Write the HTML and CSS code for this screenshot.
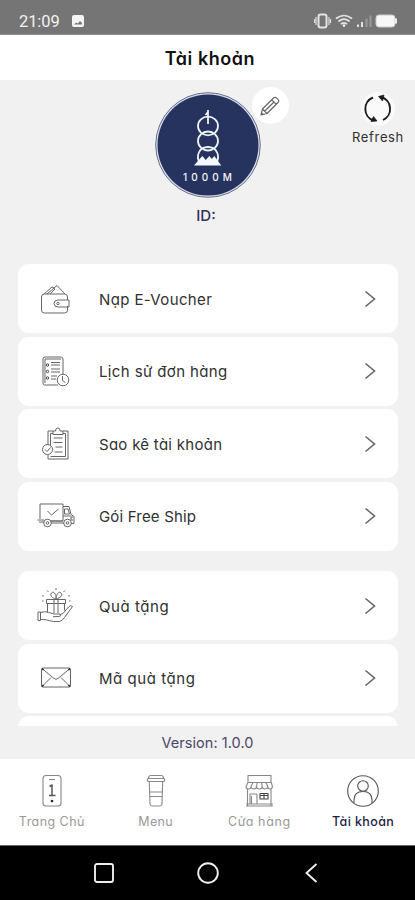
FILE: index.html
```html
<!DOCTYPE html>
<html lang="vi">
<head>
<meta charset="utf-8">
<meta name="viewport" content="width=device-width, initial-scale=1">
<title>Tài khoản</title>
<link rel="stylesheet" href="styles.css">
</head>
<body>
<header class="status">
  <span class="clock">21:09</span>
  <svg class="shot" width="12" height="12" viewBox="0 0 12 12"><rect width="12" height="12" rx="2" fill="#f4f4f4"/><path d="M2 9.5l2.2-2 1.6 1 2.2-2.500 2 2v1.500z" fill="#777"/></svg>
  <svg class="signals" width="84" height="18" viewBox="0 0 84 18" fill="none">
    <rect x="4.500" y="2.500" width="8" height="13" rx="2" stroke="#e4e4e4" stroke-width="2"/>
    <path d="M2 5v8M15 5v8M.5 7v4M16.500 7v4" stroke="#ddd" stroke-width="1.200"/>
    <g stroke="#e4e4e4" stroke-width="1.700" stroke-linecap="round"><path d="M22.500 6.200q7.500-5.400 15 0M25 9q5-3.600 10 0M27.500 11.700q2.500-1.800 5 0"/></g>
    <circle cx="30" cy="13.600" r="1.300" fill="#eee"/>
    <path d="M44 12.500v2.500M48 10v5" stroke="#eee" stroke-width="1.800"/>
    <path d="M52.500 6.500v8.500M56.500 3.500v11.500" stroke="#999" stroke-width="2"/>
    <rect x="62" y="3" width="19" height="12" rx="3" fill="#f7f7f7" stroke="#ccc"/><path d="M82 6.500v5" stroke="#eee" stroke-width="2"/>
  </svg>
</header>
<h1 class="title"><span>Tài khoản</span></h1>
<main class="account">
  <section class="profile">
    <div class="avatar">
      <svg width="108" height="108" viewBox="0 0 108 108" fill="none">
        <circle cx="54" cy="54" r="52.300" fill="#d9dde8" stroke="#68718f"/>
        <circle cx="54" cy="54" r="50.500" fill="#26335f"/>
        <g stroke="#edf2f8" stroke-width="1.800">
          <ellipse cx="54" cy="35" rx="10" ry="9.300"/>
          <ellipse cx="54" cy="50" rx="10" ry="9.500"/>
          <path d="M45.500 71.500c-3.500-6-1-15.500 8.500-15.500s12 9.500 8.500 15.500"/>
          <path d="M54 19v14M51.500 24l2.500-3"/>
        </g>
        <path d="M40 74.500l8.300-9.500 3.500 4 3.500-4 2.500 3 2.500-3 7 9.500z" fill="#f6f8fb"/>
      </svg>
      <span class="brand">1000M</span>
      <button class="edit" aria-label="Edit">
        <svg width="22" height="22" viewBox="0 0 22 22" fill="none" stroke="#666" stroke-width="1.200" stroke-linejoin="round"><path d="M2 20l1.500-6L14.500 3q1.500-1.500 3.200.2l1.200 1.200q1.600 1.600.1 3.100L8 18.500zM3.500 14L8 18.500M12.800 4.800l4.500 4.500M5.800 16L15 7M2 20l2-.5-1.500-1.500z"/></svg>
      </button>
    </div>
    <div class="uid">ID:</div>
    <button class="refresh">
      <span class="disc"><svg width="30" height="32" viewBox="0 0 30 32" fill="none" stroke="#1c1c1c" stroke-width="1.900"><path d="M10 4.500A12.300 12.300 0 0 0 10.500 27.500M20 27A12.300 12.300 0 0 0 18 4"/><path d="M8 28.500l6-.5-3.500-4.500zM21 2l-5.500 1.500 4 4.500z" fill="#1c1c1c" stroke-width=".7"/></svg></span>
      <span class="caption">Refresh</span>
    </button>
  </section>
  <div class="menu">
    <ul class="group">
      <li class="card"><svg class="icon" viewBox="0 0 40 40"><path d="M8.500 15h20q3 0 3 3v3M31.500 27v4q0 3-3 3h-20q-3 0-3-3V18q0-3 3-3M8 15l8-7 3 1.500M11 15l10-8.500 8 8.500M14 15l5-5M31 21h-9q-4 0-4 3.500t4 3.500h11V21h-2"/><circle cx="22" cy="24.500" r="1.200"/></svg><span class="label l1">Nạp E-Voucher</span><svg class="chev" viewBox="0 0 12 18"><path d="M1.500 1.500L10.500 9l-9 7.500"/></svg></li>
      <li class="card"><svg class="icon" viewBox="0 0 40 40"><path d="M22 34H8.500Q7 34 7 32V8q0-2 2-2h16q2 0 2 2v15.500M9 32V8h16"/><path d="M15 11.500H24M15 14H24M15 18H24M15 21H24M15 25H21M15 28H20"/><g class="dots"><circle cx="11.500" cy="14" r="1.200"/><circle cx="11.500" cy="20.500" r="1.200"/><circle cx="11.500" cy="27" r="1.200"/></g><circle cx="27" cy="29" r="5.800"/><path d="M26.500 25v4.500l3 2"/></svg><span class="label l2">Lịch sử đơn hàng</span><svg class="chev" viewBox="0 0 12 18"><path d="M1.500 1.500L10.500 9l-9 7.500"/></svg></li>
      <li class="card"><svg class="icon" viewBox="0 0 40 40"><path d="M17 7h-5v14M27 7h5v28H12v-4M14.500 21V9.500H17M27 9.500h2.500V32.500H14.500M17 10.500V7h2.500q0-3 2.300-3T24 7h3v3.500z"/><path d="M17.500 14h9M17.500 18.500h9M19.500 23h7M18.500 28h8"/><circle cx="11.500" cy="25.500" r="5"/><path d="M9 25.500l2 2 3.500-4"/></svg><span class="label l3">Sao kê tài khoản</span><svg class="chev" viewBox="0 0 12 18"><path d="M1.500 1.500L10.500 9l-9 7.500"/></svg></li>
      <li class="card"><svg class="icon" viewBox="0 0 40 40"><path d="M4 23V8h23v17H15M27 10.500h6l2 8 3 2v7h-3M28.500 13h3.500l1.500 5h-5zM27 20h8M1.500 24H8M3 26h5M15 27h13M15 25h12M37 21h-2v3h2"/><g><circle cx="11.500" cy="27" r="3.800"/><circle cx="11.500" cy="27" r="1.300"/><circle cx="31.500" cy="27" r="3.800"/><circle cx="31.500" cy="27" r="1.300"/></g><path d="M11.500 15l4 4 7-6"/></svg><span class="label l4">Gói Free Ship</span><svg class="chev" viewBox="0 0 12 18"><path d="M1.500 1.500L10.500 9l-9 7.500"/></svg></li>
    </ul>
    <ul class="group">
      <li class="card"><svg class="icon" viewBox="0 0 40 40"><path d="M10.500 13.500h19v4h-19zM11.500 17.500v9M28.500 17.500v7M18 13.500V27M22 13.500V27M20 13c-4-1-6.500-3.500-4.500-6s5 1.500 4.500 6c0-4.500 3-8.500 5-6s-.5 5-5 6"/><path d="M2 26h2.500v8.500H2zM4.500 26.500q4-1.500 8-.2L18 28h6q2 2-1 2.500l-6 .2M4.500 33.500c5-.5 7 1 13 2h6q3-1 5-4l8-11q-2-2-4 .5L27 27.500l-3 1"/><path d="M20 2v2M11 4.500l1.500 1.500M29 4.500L27.500 6M7 9v1.500M33 9v1.500M6 15h1.500M33 15h1.500"/></svg><span class="label l5">Quà tặng</span><svg class="chev" viewBox="0 0 12 18"><path d="M1.500 1.500L10.500 9l-9 7.500"/></svg></li>
      <li class="card"><svg class="icon" viewBox="0 0 40 40"><rect x="5.500" y="10" width="29" height="19" rx="1.500"/><path d="M6 10.500l12 10q2 1.500 4 0l12-10M6 28.500l9-9M34 28.500l-9-9"/><path class="bold" d="M6 10.500l1.500 1.500M34 10.500L32.500 12M6 28.500l1.500-1.500M34 28.500L32.500 27"/></svg><span class="label l6">Mã quà tặng</span><svg class="chev" viewBox="0 0 12 18"><path d="M1.500 1.500L10.500 9l-9 7.500"/></svg></li>
      <li class="card"></li>
    </ul>
  </div>
  <div class="version"><span>Version: 1.0.0</span></div>
</main>
<nav class="tabs">
  <a class="tab"><svg width="34" height="34" viewBox="0 0 34 34"><rect x="8" y="1.500" width="18" height="30.500" rx="3"/><path d="M14 5.500h6"/><path class="digit" d="M14.500 12.500l2.500-1.500v10.500M14 21.500h6.500"/><circle cx="17" cy="27" r=".8" fill="#222" stroke="#222"/></svg><span class="t1">Trang Chủ</span></a>
  <a class="tab"><svg width="34" height="34" viewBox="0 0 34 34"><path d="M9.500 4.500q0-3 2.500-3h10q2.500 0 2.500 3M9 4.500h16q1.500 1.500 0 3H9q-1.500-1.500 0-3M10.300 7.500L11 30q.2 2 2 2h8q1.800 0 2-2l.7-22.500M10.500 18h13M10.800 22.500h12.500"/></svg><span class="t2">Menu</span></a>
  <a class="tab"><svg width="34" height="34" viewBox="0 0 34 34"><path d="M6 1.500h23v7H6zM6 8.500l-2 4q0 2.500 2.500 2.500T9 12.500q0 2.500 2.800 2.500t2.800-2.500q0 2.500 2.800 2.500t2.800-2.500q0 2.500 2.800 2.500t2.800-2.500q0 2.500 2.300 2.500t2.300-2.500l-1.100-4M9 12.500l2-4M14.500 12.500l.8-4M20.200 12.500l-.7-4M25.800 12.500l-2-4M5.500 15v17M29 15v17M4 32h27M4 30h27M8 30V20h7v10M9.500 30v-8"/><path stroke="#444" d="M18 19.500h8v5.500h-8zM22 19.500V25M18 21.500h8"/></svg><span class="t3">Cửa hàng</span></a>
  <a class="tab active"><svg width="34" height="34" viewBox="0 0 34 34"><circle cx="17" cy="17" r="15.300"/><circle cx="17" cy="12" r="5.300"/><path d="M8 29v-3q0-8.500 9-8.500t9 8.500v3"/></svg><span class="t4">Tài khoản</span></a>
</nav>
<footer class="system">
  <svg width="20" height="20" viewBox="0 0 20 20"><rect x="1" y="1" width="18" height="18" rx="2"/></svg>
  <svg width="22" height="22" viewBox="0 0 22 22"><circle cx="11" cy="11" r="9.800"/></svg>
  <svg width="20" height="20" viewBox="0 0 20 20"><path d="M14.500 1L4.500 10l10 9"/></svg>
</footer>
</body>
</html>
```
FILE: styles.css
```css
* { box-sizing: border-box; }
body {
  margin: 0;
  width: 415px;
  height: 900px;
  display: flex;
  flex-direction: column;
  overflow: hidden;
  background: #f1f1f1;
  color: #303030;
  font-family: Inter, "Open Sans", sans-serif;
  font-feature-settings: "cv11";
}
button { border: 0; padding: 0; background: none; font: inherit; color: inherit; }
ul { list-style: none; margin: 0; padding: 0; }
svg { display: block; flex: none; }

.status {
  height: 35px;
  flex: none;
  display: flex;
  align-items: center;
  padding: 7px 17px 0 19px;
  background: #757575;
  border-bottom: 1px solid #8c8c8c;
}
.clock { font: 16.500px Roboto, sans-serif; color: #f1f1f1; width: 53px; letter-spacing: -.1px; padding-top: 2px; }
.signals { margin-left: auto; }

.title {
  margin: 0;
  height: 45px;
  flex: none;
  display: grid;
  place-items: center;
  padding-top: 2px;
  padding-left: 5px;
  background: #fff;
  color: #111;
  font-size: 18px;
  font-weight: 600;
  letter-spacing: .55px;
}

.account { height: 679px; flex: none; display: flex; flex-direction: column; }
.profile { height: 184px; flex: none; position: relative; display: flex; flex-direction: column; align-items: center; padding-top: 11px; }
.avatar { position: relative; width: 108px; height: 108px; }
.brand {
  position: absolute;
  left: 0;
  right: 0;
  top: 80px;
  text-align: center;
  padding-left: 4px;
  color: #f3f5fa;
  font-size: 10px;
  line-height: 12px;
  font-weight: 500;
  letter-spacing: 4.100px;
}
.edit {
  position: absolute;
  left: 98px;
  top: -4px;
  width: 37px;
  height: 37px;
  border-radius: 50%;
  background: #fff;
  display: grid;
  place-items: center;
}
.uid { margin-top: 8px; font-size: 15px; line-height: 18px; font-weight: 500; color: #2c3158; padding-right: 3px; }
.refresh { position: absolute; left: 342px; top: 12px; width: 72px; display: flex; flex-direction: column; align-items: center; }
.disc { width: 34px; height: 34px; border-radius: 50%; background: #fafafa; display: grid; place-items: center; }
.caption { margin-top: 2px; font-size: 13px; line-height: 18px; letter-spacing: .65px; }

.menu { height: 462px; flex: none; overflow: hidden; padding: 0 17px 0 18px; }
.group { display: flex; flex-direction: column; gap: 3.300px; }
.group + .group { margin-top: 20px; }
.card { height: 69.300px; flex: none; display: flex; align-items: center; background: #fff; border-radius: 11px; padding: 0 22px 0 18px; }
.icon { width: 40px; height: 40px; fill: none; stroke: #666; stroke-width: 1; stroke-linejoin: round; }
.bold { stroke: #222; stroke-width: 1.600; }
.dots { stroke: #444; }
.label { margin-left: 23px; padding-top: 2px; font-size: 15px; line-height: 24px; white-space: nowrap; }
.l1, .l2 { letter-spacing: .38px; }
.l3 { letter-spacing: .28px; }
.l4 { letter-spacing: .18px; }
.l5, .l6 { letter-spacing: .55px; }
.chev { width: 12px; height: 18px; margin-left: auto; fill: none; stroke: #666; stroke-width: 1.600; }
.version { height: 33px; display: grid; place-items: center; font-size: 14.500px; color: #4a4966; letter-spacing: .05px; }

.tabs { height: 86px; flex: none; background: #fff; display: grid; grid-template-columns: repeat(4, 1fr); padding-top: 15px; }
.tab { display: flex; flex-direction: column; align-items: center; gap: 5px; font-size: 12.500px; line-height: 18px; color: #999; white-space: nowrap; }
.tab svg { fill: none; stroke: #888; stroke-width: 1.100; stroke-linejoin: round; }
.tab .digit { stroke: #555; stroke-width: 1.500; }
.t1 { letter-spacing: .45px; }
.t2 { letter-spacing: .3px; }
.t3 { letter-spacing: .65px; }
.t4 { letter-spacing: .4px; }
.tab.active { color: #1d2245; font-weight: 500; }
.active svg { stroke: #555; }
.system { flex: 1; display: flex; justify-content: center; align-items: center; gap: 83px; background: #000; border-top: 1px solid #666; }
.system svg { fill: none; stroke: #eee; stroke-width: 1.900; }
```
